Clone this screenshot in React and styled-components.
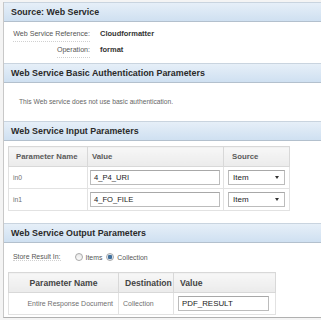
import React from 'react'
import styled, { createGlobalStyle } from 'styled-components'

const GlobalStyle = createGlobalStyle`
    body {
        margin: 0;
        background: #fff;
        font-family: "Liberation Sans", Arial, sans-serif;
        color: #333;
    }
`

const Page = styled.div`
    width: 321px;
    height: 320px;
    overflow: hidden;
    padding: 2px 0 0 3px;
    box-sizing: border-box;
    background: #f4f4f4;
`

const Panel = styled.div`
    background: #fff;
    border-left: 1px solid #c8c8c8;
    border-bottom: 1px solid #b0b0b0;
    width: 330px;
`

const Header = styled.div`
    height: 18px;
    display: flex;
    align-items: center;
    padding-left: 7px;
    border-top: 1px solid #c9d4df;
    border-bottom: 1px solid #b3c0cd;
    background: linear-gradient(#e6eff8, #cfe0f1);
    font-size: 8.9px;
    font-weight: bold;
    color: #2a2a2a;
    white-space: nowrap;
`

const Body = styled.div`
    height: ${(p) => p.h}px;
    box-sizing: border-box;
    padding: ${(p) => p.pad || '0'};
`

const FieldGrid = styled.div`
    display: grid;
    grid-template-columns: 83px auto;
    column-gap: 10px;
    align-items: center;
`

const FieldLabel = styled.div`
    justify-self: end;
    height: 15px;
    line-height: 16px;
    font-size: 7.1px;
    color: #555;
    white-space: nowrap;
    border-bottom: 1px dotted #d0d0d0;
`

const FieldValue = styled.div`
    height: 16px;
    line-height: 16px;
    font-size: 7.5px;
    font-weight: bold;
    color: #333;
`

const Note = styled.div`
    font-size: 6.7px;
    color: #666;
    padding-left: 15px;
    white-space: nowrap;
`

const Table = styled.table`
    border-collapse: collapse;
    margin-left: 4px;
    border: 1px solid #d4d4d4;
    width: ${(p) => p.w}px;
    table-layout: fixed;
`

const Th = styled.th`
    height: 19px;
    background: linear-gradient(#f7f7f7, #ebebeb);
    border: 1px solid #d8d8d8;
    font-size: ${(p) => (p.big ? 8.6 : 7.8)}px;
    font-weight: bold;
    color: ${(p) => (p.big ? '#444' : '#5a5a5a')};
    text-align: ${(p) => p.align || 'left'};
    padding: 0 0 0 ${(p) => (p.pl === undefined ? 6 : p.pl)}px;
    white-space: nowrap;
`

const Td = styled.td`
    height: ${(p) => p.h || 21}px;
    border: 1px solid #e2e2e2;
    font-size: ${(p) => p.fs || 6.8}px;
    color: #707070;
    text-align: ${(p) => p.align || 'left'};
    padding: 0 ${(p) => p.pr || 0}px 0 ${(p) => (p.pl === undefined ? 4 : p.pl)}px;
    white-space: nowrap;
`

const TextBox = styled.div`
    width: ${(p) => p.w}px;
    height: 15px;
    box-sizing: border-box;
    border: 1px solid #bcbcbc;
    border-top-color: #a8a8a8;
    background: #fff;
    font-size: ${(p) => p.fs || 7.6}px;
    color: #222;
    line-height: 13px;
    padding-left: 3px;
`

const Select = styled.div`
    width: 57px;
    height: 15px;
    box-sizing: border-box;
    border: 1px solid #bcbcbc;
    border-top-color: #a8a8a8;
    display: flex;
    align-items: center;
    justify-content: space-between;
    padding: 0 5px 0 4px;
    font-size: 8px;
    color: #222;
    background: #fff;
`

const Caret = styled.span`
    width: 0;
    height: 0;
    border-left: 2.5px solid transparent;
    border-right: 2.5px solid transparent;
    border-top: 3px solid #333;
`

const StoreRow = styled.div`
    display: flex;
    align-items: center;
    height: 16px;
    padding-left: 9px;
    font-size: 6.9px;
    color: #555;
    margin-bottom: 7px;
    white-space: nowrap;
`

const StoreLabel = styled.span`
    border-bottom: 1px dotted #d0d0d0;
    margin-right: 14px;
`

const Radio = styled.span`
    width: 8px;
    height: 8px;
    border-radius: 50%;
    box-sizing: border-box;
    border: 1px solid #a9a9a9;
    background: ${(p) =>
        p.on
            ? 'radial-gradient(circle, #3f6f9c 0 2px, #dfe8f1 2.5px)'
            : 'linear-gradient(#e8e8e8, #fbfbfb)'};
    margin-right: 3px;
`

const RadioText = styled.span`
    margin-right: 4px;
`

export default function App() {
    return (
        <>
            <GlobalStyle />
            <Page>
                <Panel>
                    <Header>Source: Web Service</Header>
                    <Body h={41} pad="4px 0 0 3px">
                        <FieldGrid>
                            <FieldLabel>Web Service Reference:</FieldLabel>
                            <FieldValue>Cloudformatter</FieldValue>
                            <FieldLabel>Operation:</FieldLabel>
                            <FieldValue>format</FieldValue>
                        </FieldGrid>
                    </Body>
                    <Header>Web Service Basic Authentication Parameters</Header>
                    <Body h={38} pad="15px 0 0 0">
                        <Note>This Web service does not use basic authentication.</Note>
                    </Body>
                    <Header>Web Service Input Parameters</Header>
                    <Body h={82} pad="5px 0 0 0">
                        <Table w={281}>
                            <colgroup>
                                <col style={{ width: 79 }} />
                                <col style={{ width: 136 }} />
                                <col style={{ width: 66 }} />
                            </colgroup>
                            <thead>
                                <tr>
                                    <Th pl={7}>Parameter Name</Th>
                                    <Th pl={4}>Value</Th>
                                    <Th pl={8}>Source</Th>
                                </tr>
                            </thead>
                            <tbody>
                                <tr>
                                    <Td>in0</Td>
                                    <Td pl={2}><TextBox w={130}>4_P4_URI</TextBox></Td>
                                    <Td pl={4}><Select>Item<Caret /></Select></Td>
                                </tr>
                                <tr>
                                    <Td>in1</Td>
                                    <Td pl={2}><TextBox w={130}>4_FO_FILE</TextBox></Td>
                                    <Td pl={4}><Select>Item<Caret /></Select></Td>
                                </tr>
                            </tbody>
                        </Table>
                    </Body>
                    <Header>Web Service Output Parameters</Header>
                    <Body h={74} pad="6px 0 0 0">
                        <StoreRow>
                            <StoreLabel>Store Result In:</StoreLabel>
                            <Radio />
                            <RadioText>Items</RadioText>
                            <Radio on />
                            <RadioText>Collection</RadioText>
                        </StoreRow>
                        <Table w={267}>
                            <colgroup>
                                <col style={{ width: 110 }} />
                                <col style={{ width: 55 }} />
                                <col style={{ width: 102 }} />
                            </colgroup>
                            <thead>
                                <tr>
                                    <Th big align="center" pl={0}>Parameter Name</Th>
                                    <Th big pl={6}>Destination</Th>
                                    <Th big pl={6}>Value</Th>
                                </tr>
                            </thead>
                            <tbody>
                                <tr>
                                    <Td align="right" pr={5} pl={0} fs={7}>Entire Response Document</Td>
                                    <Td pl={4} fs={7}>Collection</Td>
                                    <Td pl={4}><TextBox w={91} fs={7.9}>PDF_RESULT</TextBox></Td>
                                </tr>
                            </tbody>
                        </Table>
                    </Body>
                </Panel>
            </Page>
        </>
    )
}
